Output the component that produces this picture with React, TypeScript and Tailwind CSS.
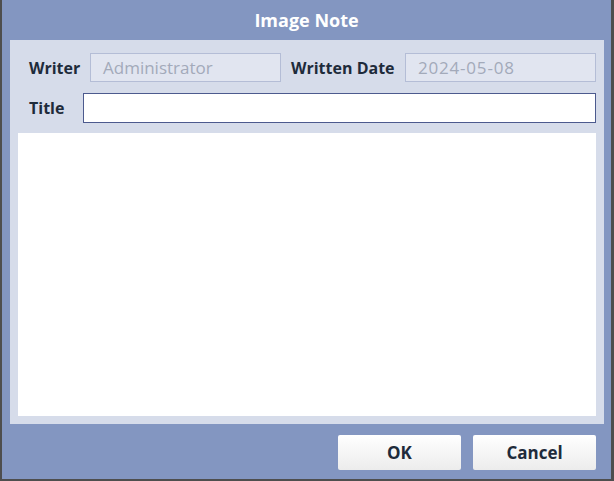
import React from 'react';

const font = { fontFamily: '"Open Sans", Lato, sans-serif' };

function ReadonlyField({ value, width, extra = '' }: { value: string; width: string; extra?: string }) {
  return (
    <div
      className={`${width} h-[29px] border border-[#b4bdd6] bg-[#e1e5f0] px-3 flex items-center text-[17px] text-[#a3aaba] ${extra}`}
    >
      {value}
    </div>
  );
}

export default function App() {
  return (
    <div
      className="w-[614px] h-[481px] flex flex-col bg-[#8396c1] border-l-2 border-r-[3px] border-b-2 border-[#4e4e4e]"
      style={font}
    >
      <div className="h-[40px] flex items-center justify-center text-white font-bold text-[18px]">
        Image Note
      </div>

      <div className="mx-[8px] mr-[7px] h-[384px] bg-[#d6dcea] flex flex-col px-[8px] pt-[13px] pb-[8px]">
        <div className="flex items-center pl-[11px] h-[29px]">
          <span className="font-bold text-[16px] text-[#1e2b3b] w-[61px]">Writer</span>
          <ReadonlyField value="Administrator" width="w-[191px]" />
          <span className="font-bold text-[16px] text-[#1e2b3b] ml-[10px] w-[114px]">Written Date</span>
          <ReadonlyField value="2024-05-08" width="w-[191px]" extra="tracking-[0.8px]" />
        </div>

        <div className="flex items-center pl-[11px] h-[29px] mt-[11px]">
          <span className="font-bold text-[16px] text-[#1e2b3b] w-[54px]">Title</span>
          <input
            type="text"
            className="flex-1 h-[30px] border border-[#4c5a8e] bg-white outline-none px-2 text-[15px]"
          />
        </div>

        <div className="flex-1 bg-white mt-[11px]" />
      </div>

      <div className="flex-1 flex justify-end items-start gap-[12px] pt-[11px] pr-[15px]">
        <button className="w-[123px] h-[35px] rounded-[2px] bg-gradient-to-b from-white to-[#ececec] font-bold text-[17px] text-[#1e2b3b]">
          OK
        </button>
        <button className="w-[123px] h-[35px] rounded-[2px] bg-gradient-to-b from-white to-[#ececec] font-bold text-[17px] text-[#1e2b3b]">
          Cancel
        </button>
      </div>
    </div>
  );
}
